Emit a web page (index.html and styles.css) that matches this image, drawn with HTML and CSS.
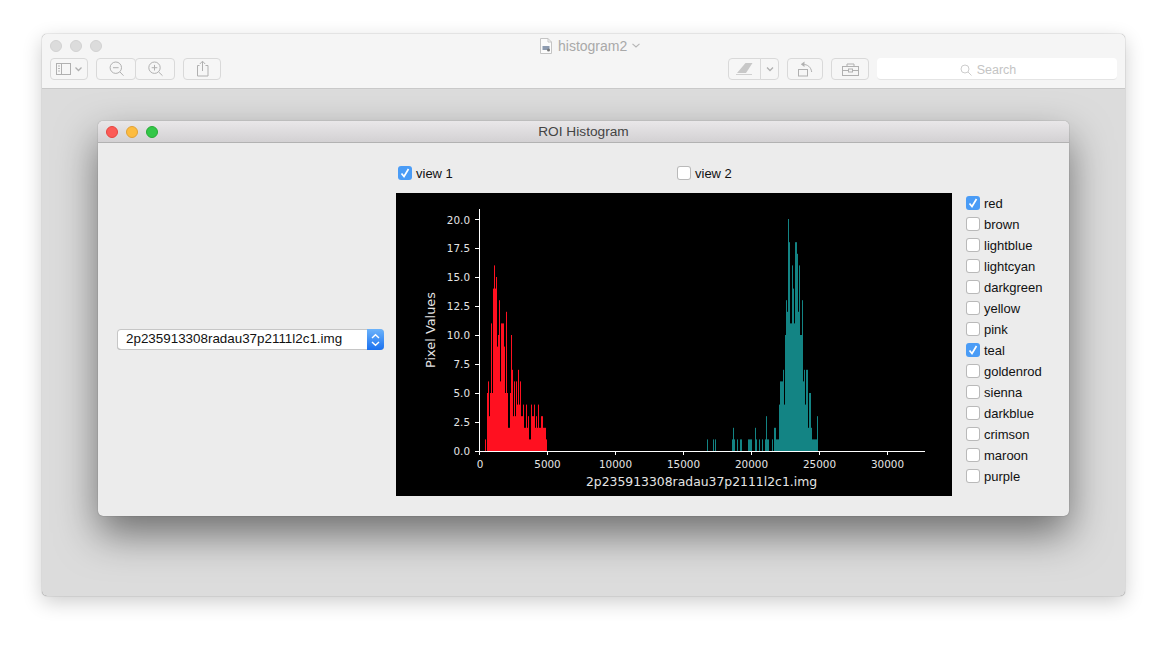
FILE: index.html
```html
<!DOCTYPE html>
<html lang="en">
<head>
    <meta charset="UTF-8">
    <meta name="viewport" content="width=device-width, initial-scale=1.0">
    <title>ROI Histogram</title>
    <link rel="stylesheet" href="styles.css">
</head>
<body>
    <div class="preview">
        <div class="preview-head">
            <div class="title-row">
                <div class="dots">
                    <span class="dot"></span><span class="dot"></span><span class="dot"></span>
                </div>
                <div class="doc-title">
                    <svg class="doc-icon" width="12" height="16" viewBox="0 0 12 16">
                        <path d="M.5.5H8L11.5 4V15.5H.5Z" fill="#fbfbfb" stroke="#c4c4c4"/>
                        <path d="M8 .5V4H11.5" fill="none" stroke="#c4c4c4"/>
                        <rect x="2.5" y="8" width="7" height="4" fill="#8d9bb0"/>
                        <circle cx="8.5" cy="12" r="1.5" fill="#777"/>
                    </svg>
                    <span>histogram2</span>
                    <svg width="8" height="5" viewBox="0 0 8 5"><path d="M.5.8 4 4 7.5.8" fill="none" stroke="#b5b5b5" stroke-width="1.1"/></svg>
                </div>
            </div>
            <div class="toolbar">
                <div class="tool tool-sidebar">
                    <svg width="38" height="22" viewBox="0 0 38 22" fill="none" stroke="#b0b0b0">
                        <rect x="6.5" y="5.5" width="14" height="11"/>
                        <path d="M11.5 5.5V16.5"/>
                        <path d="M8 8H10M8 10.5H10M8 13H10" stroke-width=".9"/>
                        <path d="M25.5 9.5 28.5 12.5 31.5 9.5" stroke-width="1.3"/>
                    </svg>
                </div>
                <div class="tool-group">
                    <div class="tool tool-zoom">
                        <svg width="39" height="22" viewBox="0 0 39 22" fill="none" stroke="#b0b0b0">
                            <circle cx="18.8" cy="9.7" r="5.7"/>
                            <path d="M16 9.7H21.6M23 14 26.5 17.7"/>
                        </svg>
                    </div>
                    <div class="tool tool-zoom joined">
                        <svg width="39" height="22" viewBox="0 0 39 22" fill="none" stroke="#b0b0b0">
                            <circle cx="18.5" cy="9.7" r="5.7"/>
                            <path d="M15.7 9.7H21.3M18.5 6.9V12.5M22.7 14 26.5 17.7"/>
                        </svg>
                    </div>
                </div>
                <div class="tool tool-share">
                    <svg width="38" height="22" viewBox="0 0 38 22" fill="none" stroke="#b0b0b0">
                        <path d="M16.5 7.5H14.5V18H25V7.5H22.5"/>
                        <path d="M19.5 13V3.5M16.8 6 19.5 3.2 22.2 6"/>
                    </svg>
                </div>
                <div class="tool-spacer"></div>
                <div class="tool tool-markup">
                    <svg width="33" height="22" viewBox="0 0 33 22">
                        <path d="M9 15 17.5 5H24.5L18 15Z" fill="#c8c8c8"/>
                        <path d="M8 16.5H24" stroke="#d0d0d0" fill="none"/>
                    </svg>
                </div>
                <div class="tool tool-caret">
                    <svg width="18" height="22" viewBox="0 0 18 22" fill="none" stroke="#b0b0b0">
                        <path d="M6 9.5 9 12.5 12 9.5" stroke-width="1.3"/>
                    </svg>
                </div>
                <div class="tool tool-rotate">
                    <svg width="36" height="22" viewBox="0 0 36 22" fill="none" stroke="#b0b0b0">
                        <rect x="11.5" y="11.5" width="9" height="6.5"/>
                        <path d="M16 6.5C20.5 6.3 24 9 24.7 14"/>
                        <path d="M17.5 3.6 13.8 6.3 17.5 9" fill="#b0b0b0" stroke="none"/>
                    </svg>
                </div>
                <div class="tool tool-kit">
                    <svg width="38" height="22" viewBox="0 0 38 22" fill="none" stroke="#b0b0b0">
                        <rect x="11.5" y="8.5" width="16" height="9"/>
                        <path d="M16 8.5V6H23V8.5M11.5 12.5H17.5M21.5 12.5H27.5"/>
                        <rect x="17.5" y="11" width="4" height="3"/>
                    </svg>
                </div>
                <div class="search">
                    <svg width="12" height="12" viewBox="0 0 12 12" fill="none" stroke="#cdcdcd">
                        <circle cx="5" cy="5" r="4"/>
                        <path d="M8 8 11.5 11.5"/>
                    </svg>
                    <span>Search</span>
                </div>
            </div>
        </div>

        <div class="preview-body">
            <div class="dialog">
                <div class="dialog-head">
                    <div class="lights">
                        <span class="light light-red"></span><span class="light light-amber"></span><span class="light light-green"></span>
                    </div>
                    <div class="dialog-title">ROI Histogram</div>
                </div>
                <div class="dialog-body">
                    <div class="file-col">
                        <div class="file-select">
                            <span class="file-name">2p235913308radau37p2111l2c1.img</span>
                            <span class="file-arrows">
                                <svg width="9" height="14" viewBox="0 0 9 14" fill="none" stroke="#fff" stroke-width="1.4">
                                    <path d="M1 5 4.5 1.8 8 5M1 9 4.5 12.2 8 9"/>
                                </svg>
                            </span>
                        </div>
                    </div>

                    <div class="chart-col">
                        <div class="views">
                            <label class="opt"><span class="box on"><svg width="14" height="14" viewBox="0 0 14 14"><path d="M3.5 7.5 6 10.5 10.5 3" fill="none" stroke="#fff" stroke-width="1.7"/></svg></span>view 1</label>
                            <label class="opt"><span class="box"></span>view 2</label>
                        </div>
                        <svg class="chart" width="556" height="303" viewBox="396 193 556 303">
                            <rect x="396" y="193" width="556" height="303" fill="#000"/>
                            <!-- bars: x in page px, y in counts -->
                            <g transform="translate(0 451) scale(1 -11.6)" fill="none" stroke-width="1">
                                <path stroke="#ff1020" vector-effect="non-scaling-stroke" d="M485.5 0V1M487.5 0V5M488.5 0V6M489.5 0V3M490.5 0V5M491.5 0V11M492.5 0V5M493.5 0V14M494.5 0V16M495.5 0V14M496.5 0V15M497.5 0V9M498.5 0V10M499.5 0V13M500.5 0V6M501.5 0V11M502.5 0V11M503.5 0V11M504.5 0V9M505.5 0V5M506.5 0V12M507.5 0V5M508.5 0V2M509.5 0V2M510.5 0V5M511.5 0V10M512.5 0V7M513.5 0V3M514.5 0V6M515.5 0V3M516.5 0V6M517.5 0V4M518.5 0V7M519.5 0V4M520.5 0V6M521.5 0V3M522.5 0V3M523.5 0V4M524.5 0V2M525.5 0V2M526.5 0V4M527.5 0V2M528.5 0V3M529.5 0V1M530.5 0V1M531.5 0V4M532.5 0V3M533.5 0V3M534.5 0V4M535.5 0V2M536.5 0V3M537.5 0V2M538.5 0V4M539.5 0V2M540.5 0V2M541.5 0V3M542.5 0V3M543.5 0V2M544.5 0V2M545.5 0V2M546.5 0V1"/>
                                <path stroke="#138484" vector-effect="non-scaling-stroke" d="M707.5 0V1M713.5 0V1M715.5 0V1M732.5 0V1M733.5 0V2M734.5 0V1M737.5 0V1M740.5 0V1M741.5 0V1M748.5 0V1M749.5 0V1M750.5 0V1M751.5 0V1M755.5 0V2M756.5 0V1M759.5 0V1M762.5 0V1M765.5 0V1M766.5 0V3M767.5 0V1M768.5 0V1M772.5 0V1M774.5 0V2M775.5 0V2M776.5 0V1M777.5 0V1M778.5 0V1M779.5 0V4M780.5 0V6M781.5 0V6M782.5 0V6M783.5 0V7M784.5 0V4M785.5 0V10M786.5 0V13M787.5 0V12M788.5 0V20M789.5 0V18M790.5 0V11M791.5 0V11M792.5 0V16M793.5 0V14M794.5 0V11M795.5 0V18M796.5 0V18M797.5 0V17M798.5 0V12M799.5 0V16M800.5 0V10M801.5 0V10M802.5 0V13M803.5 0V6M804.5 0V7M805.5 0V4M806.5 0V7M807.5 0V7M808.5 0V2M809.5 0V5M810.5 0V5M811.5 0V2M812.5 0V1M813.5 0V1M814.5 0V1M815.5 0V1M816.5 0V1M817.5 0V3"/>
                            </g>
                            <path d="M479.5 209V455M479 451.5H925M475 451.5H479M475 422.5H479M475 393.5H479M475 364.5H479M475 335.5H479M475 306.5H479M475 277.5H479M475 248.5H479M475 219.5H479M547.5 451V455M615.5 451V455M683.5 451V455M751.5 451V455M819.5 451V455M887.5 451V455" fill="none" stroke="#fff"/>
                            <g class="tick-y">
                                <text x="470" y="455">0.0</text>
                                <text x="470" y="426">2.5</text>
                                <text x="470" y="397">5.0</text>
                                <text x="470" y="368">7.5</text>
                                <text x="470" y="339">10.0</text>
                                <text x="470" y="310">12.5</text>
                                <text x="470" y="281">15.0</text>
                                <text x="470" y="252">17.5</text>
                                <text x="470" y="224">20.0</text>
                            </g>
                            <g class="tick-x">
                                <text x="480" y="468">0</text>
                                <text x="547.5" y="468">5000</text>
                                <text x="615.5" y="468">10000</text>
                                <text x="683.5" y="468">15000</text>
                                <text x="751.5" y="468">20000</text>
                                <text x="819.5" y="468">25000</text>
                                <text x="887.5" y="468">30000</text>
                            </g>
                            <text class="axis-label y-label" transform="translate(435 330) rotate(-90)">Pixel Values</text>
                            <text class="axis-label" x="701.5" y="486">2p235913308radau37p2111l2c1.img</text>
                        </svg>
                    </div>

                    <div class="color-col">
                        <label class="opt"><span class="box on"><svg width="14" height="14" viewBox="0 0 14 14"><path d="M3.5 7.5 6 10.5 10.5 3" fill="none" stroke="#fff" stroke-width="1.7"/></svg></span>red</label>
                        <label class="opt"><span class="box"></span>brown</label>
                        <label class="opt"><span class="box"></span>lightblue</label>
                        <label class="opt"><span class="box"></span>lightcyan</label>
                        <label class="opt"><span class="box"></span>darkgreen</label>
                        <label class="opt"><span class="box"></span>yellow</label>
                        <label class="opt"><span class="box"></span>pink</label>
                        <label class="opt"><span class="box on"><svg width="14" height="14" viewBox="0 0 14 14"><path d="M3.5 7.5 6 10.5 10.5 3" fill="none" stroke="#fff" stroke-width="1.7"/></svg></span>teal</label>
                        <label class="opt"><span class="box"></span>goldenrod</label>
                        <label class="opt"><span class="box"></span>sienna</label>
                        <label class="opt"><span class="box"></span>darkblue</label>
                        <label class="opt"><span class="box"></span>crimson</label>
                        <label class="opt"><span class="box"></span>maroon</label>
                        <label class="opt"><span class="box"></span>purple</label>
                    </div>
                </div>
            </div>
        </div>
    </div>
</body>
</html>
```

FILE: styles.css
```css
html, body {
    height: 100%;
}
body {
    margin: 0;
    padding: 34px 42px 0;
    box-sizing: border-box;
    background-color: #fff;
    font-family: "Liberation Sans", Arial, sans-serif;
    font-size: 13px;
    color: #111;
    overflow: hidden;
}

/* outer preview window */
.preview {
    width: 1083px;
    height: 562px;
    border-radius: 5px;
    background-color: #dcdcdc;
    box-shadow: 0 0 1px rgba(0, 0, 0, 0.6), 0 6px 20px rgba(0, 0, 0, 0.2);
    overflow: hidden;
}
.preview-head {
    height: 54px;
    background-color: #f5f5f5;
    border-bottom: 1px solid #c9c9c9;
}
.title-row {
    height: 24px;
    display: flex;
    align-items: center;
    padding-left: 8px;
}
.dots {
    display: flex;
    gap: 8px;
}
.dot {
    width: 12px;
    height: 12px;
    border-radius: 50%;
    background-color: #dcdcdc;
    border: 1px solid #d2d2d2;
    box-sizing: border-box;
}
.doc-title {
    display: flex;
    align-items: center;
    margin-left: 438px;
    margin-top: -1px;
    color: #a9a9a9;
    font-size: 14px;
}
.doc-title span {
    margin: 0 5px 0 6px;
}
.toolbar {
    display: flex;
    padding-left: 8px;
}
.tool {
    height: 22px;
    border: 1px solid #d9d9d9;
    border-radius: 4px;
    box-sizing: border-box;
    background-color: #f6f6f6;
    display: flex;
    align-items: center;
    justify-content: center;
    overflow: hidden;
}
.tool svg {
    flex: none;
}
.tool-sidebar {
    width: 38px;
}
.tool-group {
    display: flex;
    margin-left: 8px;
}
.tool-zoom {
    width: 40px;
}
.tool-zoom.joined {
    margin-left: -1px;
}
.tool-share {
    width: 38px;
    margin-left: 8px;
}
.tool-spacer {
    width: 507px;
}
.tool-markup {
    width: 33px;
    border-radius: 4px 0 0 4px;
}
.tool-caret {
    width: 19px;
    margin-left: -1px;
    border-radius: 0 4px 4px 0;
}
.tool-rotate {
    width: 36px;
    margin-left: 8px;
}
.tool-kit {
    width: 38px;
    margin-left: 8px;
}
.search {
    width: 240px;
    height: 22px;
    margin-left: 8px;
    box-sizing: border-box;
    border-bottom: 1px solid #e4e4e4;
    border-radius: 4px;
    background-color: #fff;
    color: #c4c4c4;
    font-size: 12.5px;
    display: flex;
    align-items: center;
    justify-content: center;
    gap: 5px;
    padding: 2px 18px 0 0;
}

.preview-body {
    padding: 32px 56px;
}

/* ROI Histogram dialog */
.dialog {
    width: 971px;
    height: 395px;
    border-radius: 5px;
    background-color: #ececec;
    box-shadow: 0 0 1px rgba(0, 0, 0, 0.5), 0 18px 40px rgba(0, 0, 0, 0.5);
    overflow: hidden;
}
.dialog-head {
    height: 21px;
    display: grid;
    grid-template-columns: 1fr auto 1fr;
    align-items: center;
    background: linear-gradient(#e9e7e9, #d3d1d3);
    border-bottom: 1px solid #b2b2b2;
}
.dialog-title {
    color: #444;
    font-size: 13.7px;
}
.lights {
    display: flex;
    gap: 8px;
    padding-left: 8px;
}
.light {
    width: 12px;
    height: 12px;
    border-radius: 50%;
    box-sizing: border-box;
}
.light-red {
    background-color: #fc5b57;
    border: 1px solid #e5453f;
}
.light-amber {
    background-color: #fdbc40;
    border: 1px solid #e0a136;
}
.light-green {
    background-color: #33c748;
    border: 1px solid #27aa35;
}
.dialog-body {
    display: flex;
    height: 373px;
}
.file-col {
    width: 298px;
    box-sizing: border-box;
    padding: 20px 0 0 19px;
    display: flex;
    align-items: center;
}
.file-select {
    width: 267px;
    height: 21px;
    display: flex;
    box-sizing: border-box;
    border-radius: 4px;
    background-color: #fff;
    box-shadow: inset 0 0 0 1px #c6c6c6, inset 0 -1px 0 #a6a6a6;
    overflow: hidden;
}
.file-name {
    flex: 1;
    padding-left: 9px;
    line-height: 20px;
    font-size: 13.4px;
    color: #111;
}
.file-arrows {
    width: 17px;
    background: linear-gradient(#6cb3fa, #1a71f0);
    display: flex;
    align-items: center;
    justify-content: center;
}
.chart-col {
    width: 556px;
    padding-top: 23px;
}
.views {
    display: grid;
    grid-template-columns: 279px 279px;
    grid-template-rows: 16px;
    padding-left: 2px;
    height: 16px;
    margin-bottom: 11px;
}
.views .box {
    margin-top: -2px;
}
.chart {
    display: block;
}
.chart text {
    font-family: "DejaVu Sans", sans-serif;
    fill: #e4e4e4;
}
.tick-y text {
    font-size: 10.4px;
    text-anchor: end;
}
.tick-x text {
    font-size: 10.4px;
    text-anchor: middle;
}
.chart .axis-label {
    font-size: 12.4px;
    text-anchor: middle;
}
.chart .y-label {
    font-size: 12.9px;
}
.color-col {
    margin-left: 14px;
    padding-top: 50px;
}
.color-col .opt {
    height: 21px;
}
.color-col .box {
    margin-top: -1px;
}
.opt {
    display: flex;
    align-items: center;
    gap: 4px;
    line-height: 14px;
    color: #111;
}
.box {
    width: 14px;
    height: 14px;
    flex: none;
    box-sizing: border-box;
    border-radius: 3px;
    background-color: #fff;
    box-shadow: inset 0 0 0 1px #b9b9b9;
}
.box.on {
    background-color: #4a9cf6;
    box-shadow: none;
}
.box svg {
    display: block;
}
```
